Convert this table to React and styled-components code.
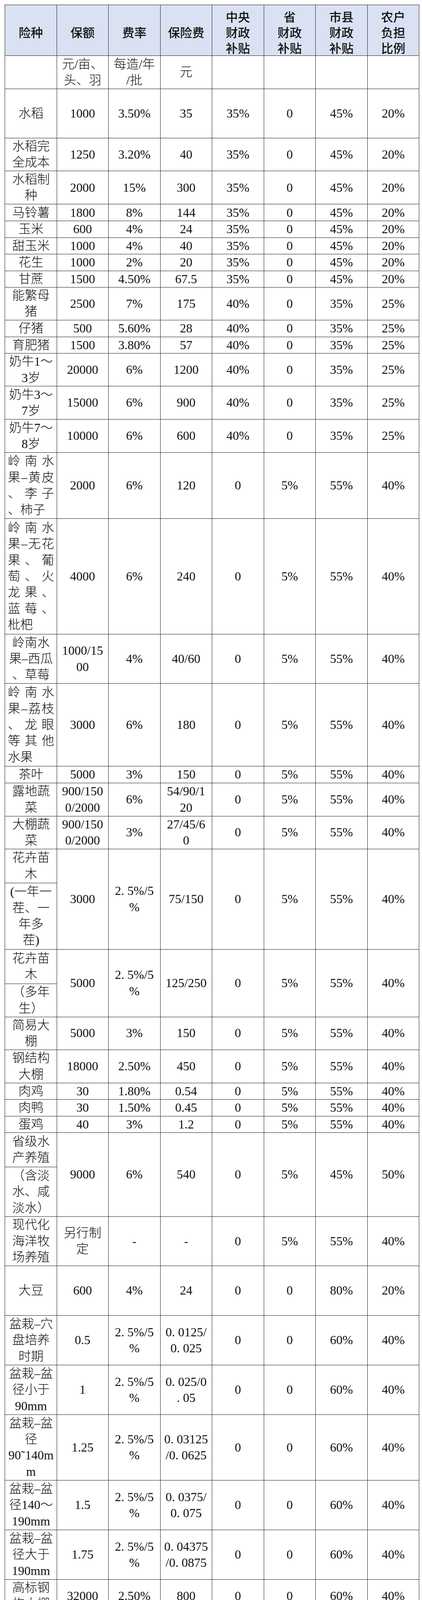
import React from 'react'
import styled, { createGlobalStyle } from 'styled-components'

const GlobalStyle = createGlobalStyle`
  html, body {
    margin: 0;
    padding: 0;
    background: #fff;
  }
  body {
    font-family: "Liberation Serif", "Noto Sans CJK SC", serif;
    color: #111;
  }
`

const heads = ['险种', '保额', '费率', '保险费', '中央|财政|补贴', '省|财政|补贴', '市县|财政|补贴', '农户|负担|比例']

const units = ['', '元/亩、|头、羽', '每造/年|/批', '元', '', '', '', '']

// h: row height in px (an array when the first column is split in two)
// j: first column lines are spread to full width (Word style distributed text)
const rows = [
  { h: 125.5, name: '水稻', v: ['1000', '3.50%', '35', '35%', '0', '45%', '20%'] },
  { h: 84.7, name: '水稻完|全成本', v: ['1250', '3.20%', '40', '35%', '0', '45%', '20%'] },
  { h: 85.3, name: '水稻制|种', v: ['2000', '15%', '300', '35%', '0', '45%', '20%'] },
  { h: 42.7, name: '马铃薯', v: ['1800', '8%', '144', '35%', '0', '45%', '20%'] },
  { h: 42.6, name: '玉米', v: ['600', '4%', '24', '35%', '0', '45%', '20%'] },
  { h: 42.4, name: '甜玉米', v: ['1000', '4%', '40', '35%', '0', '45%', '20%'] },
  { h: 42.4, name: '花生', v: ['1000', '2%', '20', '35%', '0', '45%', '20%'] },
  { h: 42.4, name: '甘蔗', v: ['1500', '4.50%', '67.5', '35%', '0', '45%', '20%'] },
  { h: 84, name: '能繁母|猪', v: ['2500', '7%', '175', '40%', '0', '35%', '25%'] },
  { h: 42.6, name: '仔猪', v: ['500', '5.60%', '28', '40%', '0', '35%', '25%'] },
  { h: 42.6, name: '育肥猪', v: ['1500', '3.80%', '57', '40%', '0', '35%', '25%'] },
  { h: 84, name: '奶牛1～|3岁', v: ['20000', '6%', '1200', '40%', '0', '35%', '25%'] },
  { h: 85, name: '奶牛3～|7岁', v: ['15000', '6%', '900', '40%', '0', '35%', '25%'] },
  { h: 85, name: '奶牛7～|8岁', v: ['10000', '6%', '600', '40%', '0', '35%', '25%'] },
  { h: 169, j: true, name: '岭南水|果–黄皮|、李子|、柿子', v: ['2000', '6%', '120', '0', '5%', '55%', '40%'] },
  { h: 296, j: true, name: '岭南水|果–无花|果、葡|萄、火|龙果、|蓝莓、|枇杷', v: ['4000', '6%', '240', '0', '5%', '55%', '40%'] },
  { h: 126, name: '岭南水|果–西瓜|、草莓', v: ['1000/15|00', '4%', '40/60', '0', '5%', '55%', '40%'] },
  { h: 212, j: true, name: '岭南水|果–荔枝|、龙眼|等其他|水果', v: ['3000', '6%', '180', '0', '5%', '55%', '40%'] },
  { h: 42.4, name: '茶叶', v: ['5000', '3%', '150', '0', '5%', '55%', '40%'] },
  { h: 85, name: '露地蔬|菜', v: ['900/150|0/2000', '6%', '54/90/1|20', '0', '5%', '55%', '40%'] },
  { h: 84, name: '大棚蔬|菜', v: ['900/150|0/2000', '3%', '27/45/6|0', '0', '5%', '55%', '40%'] },
  { h: [87, 170], name: '花卉苗|木', sub: '(一年一|茬、一|年多|茬)', v: ['3000', '2. 5%/5|%', '75/150', '0', '5%', '55%', '40%'] },
  { h: [88, 85], name: '花卉苗|木', sub: '（多年|生）', v: ['5000', '2. 5%/5|%', '125/250', '0', '5%', '55%', '40%'] },
  { h: 84, name: '简易大|棚', v: ['5000', '3%', '150', '0', '5%', '55%', '40%'] },
  { h: 85, name: '钢结构|大棚', v: ['18000', '2.50%', '450', '0', '5%', '55%', '40%'] },
  { h: 42.4, name: '肉鸡', v: ['30', '1.80%', '0.54', '0', '5%', '55%', '40%'] },
  { h: 42.6, name: '肉鸭', v: ['30', '1.50%', '0.45', '0', '5%', '55%', '40%'] },
  { h: 42.4, name: '蛋鸡', v: ['40', '3%', '1.2', '0', '5%', '55%', '40%'] },
  { h: [88, 127], name: '省级水|产养殖', sub: '（含淡|水、咸|淡水）', v: ['9000', '6%', '540', '0', '5%', '45%', '50%'] },
  { h: 126, name: '现代化|海洋牧|场养殖', v: ['另行制|定', '-', '-', '0', '5%', '55%', '40%'] },
  { h: 127, name: '大豆', v: ['600', '4%', '24', '0', '0', '80%', '20%'] },
  { h: 127, name: '盆栽–穴|盘培养|时期', v: ['0.5', '2. 5%/5|%', '0. 0125/|0. 025', '0', '0', '60%', '40%'] },
  { h: 127, name: '盆栽–盆|径小于|90mm', v: ['1', '2. 5%/5|%', '0. 025/0|. 05', '0', '0', '60%', '40%'] },
  { h: 168, name: '盆栽–盆|径|90˜140m|m', v: ['1.25', '2. 5%/5|%', '0. 03125|/0. 0625', '0', '0', '60%', '40%'] },
  { h: 127, name: '盆栽–盆|径140～|190mm', v: ['1.5', '2. 5%/5|%', '0. 0375/|0. 075', '0', '0', '60%', '40%'] },
  { h: 127, name: '盆栽–盆|径大于|190mm', v: ['1.75', '2. 5%/5|%', '0. 04375|/0. 0875', '0', '0', '60%', '40%'] },
  { h: 84, name: '高标钢|构大棚', v: ['32000', '2.50%', '800', '0', '0', '60%', '40%'] },
  { h: 169, j: true, name: '高标钢|构大棚|（附加|险）', v: ['10000', '5%', '500', '0', '0', '60%', '40%'] },
  { h: 211, j: true, name: '省级水|产养殖|（含淡|水、咸|淡水）', v: ['9000', '6%', '540', '0', '5%', '45%', '50%'] },
  { h: [88, 126], name: '地方水|产养殖', sub: '（含淡|水、咸|淡水）', v: ['物化成|本表', '4%/4. 8|%/5. 6%', '——', '0', '0', '50%', '50%'] },
]

function Text({ text, spread }) {
  const lines = text.split('|')
  return lines.map((line, i) => {
    const align = !spread ? 'center' : i < lines.length - 1 ? 'justify' : 'left'
    return <Line key={i} $align={align}>{line}</Line>
  })
}

export default function App() {
  return (
    <Page>
      <GlobalStyle />
      <Table>
        <tbody>
          <Row $h={130}>
            {heads.map((t, i) => (
              <HeadCell key={i}><Text text={t} /></HeadCell>
            ))}
          </Row>
          <Row $h={85}>
            {units.map((t, i) => (
              <Cell key={i} $name={i === 0}>{t && <Text text={t} />}</Cell>
            ))}
          </Row>
          {rows.map((r, i) => {
            if (Array.isArray(r.h)) {
              return (
                <React.Fragment key={i}>
                  <Row $h={r.h[0]}>
                    <Cell $name><Text text={r.name} /></Cell>
                    {r.v.map((v, k) => (
                      <Cell key={k} rowSpan={2}><Text text={v} /></Cell>
                    ))}
                  </Row>
                  <Row $h={r.h[1]}>
                    <Cell $name><Text text={r.sub} /></Cell>
                  </Row>
                </React.Fragment>
              )
            }
            return (
              <Row key={i} $h={r.h}>
                <Cell $name><Text text={r.name} spread={r.j} /></Cell>
                {r.v.map((v, k) => (
                  <Cell key={k}><Text text={v} /></Cell>
                ))}
              </Row>
            )
          })}
        </tbody>
      </Table>
    </Page>
  )
}

const Page = styled.div`
  width: 1080px;
  box-sizing: border-box;
  padding: 12px 0 8px 12px;
`

const Table = styled.table`
  width: 1061px;
  border-collapse: collapse;
  table-layout: fixed;
`

const Row = styled.tr`
  height: ${p => p.$h}px;
`

const HeadCell = styled.th`
  background: #d9e1f3;
  border: 1px solid #1c1c1c;
  padding: 8px 0 0;
  font-family: "Noto Sans CJK SC", sans-serif;
  font-weight: 500;
  font-size: 31px;
  line-height: 40px;
  color: #111;
  text-align: center;
  vertical-align: middle;
`

const Cell = styled.td`
  border: 1px solid #1c1c1c;
  padding: ${p => (p.$name ? '0 6px 0 7px' : '0 2px')};
  font-size: 32px;
  font-weight: 300;
  line-height: 41.4px;
  text-align: center;
  vertical-align: middle;
`

const Line = styled.span`
  display: block;
  white-space: nowrap;
  text-align: ${p => p.$align};
  text-align-last: ${p => p.$align};
`
